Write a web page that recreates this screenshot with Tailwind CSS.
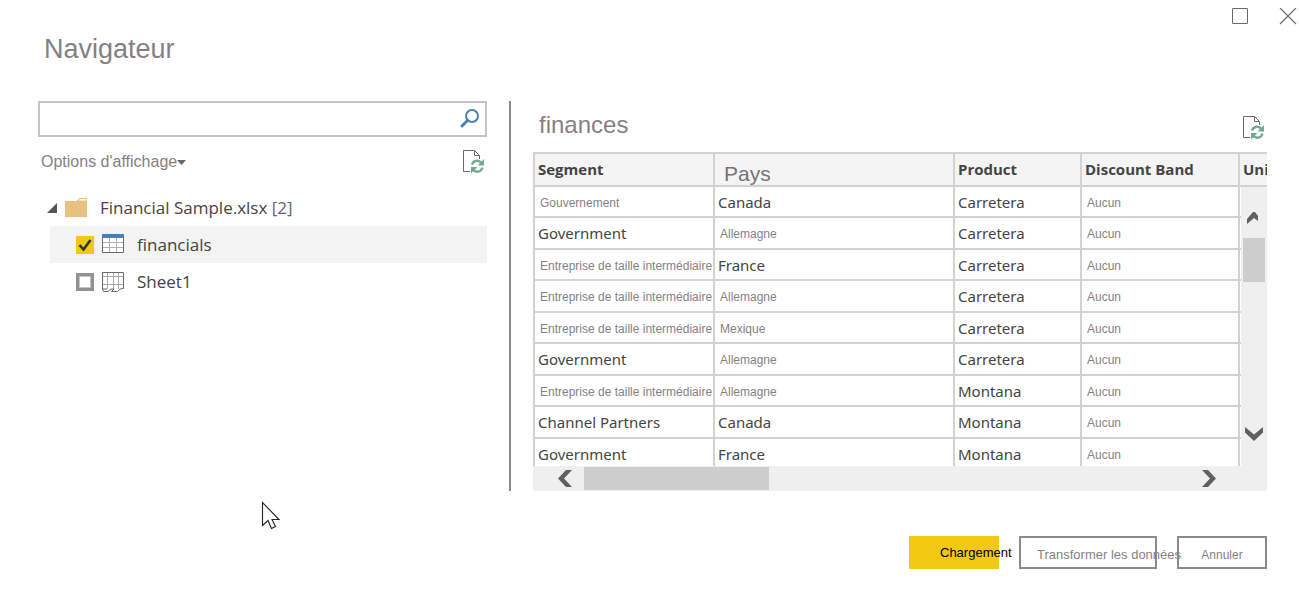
<!DOCTYPE html>
<html lang="fr">
<head>
<meta charset="utf-8">
<title>Navigateur</title>
<script src="https://cdn.jsdelivr.net/npm/@tailwindcss/browser@4"></script>
</head>
<body class="bg-white text-[#444444] font-['Noto_Sans','Open_Sans',sans-serif]">
<svg class="hidden" aria-hidden="true">
  <symbol id="refresh" viewBox="0 0 23 25">
    <path d="M8 22.500H1.500V1.500H12.500L17.500 6.500V10M12.500 1.500V6.500H17.500" fill="none" stroke="#6a6a6a"/>
    <path d="M10 15.500C11.500 11 17 10.500 19.500 14M20.500 18.500C19 23.500 13.500 24 11 20.500" fill="none" stroke="#74a892" stroke-width="2.400"/>
    <path d="M22 10V16.500H15.500ZM9 24.500V18H15.500Z" fill="#74a892"/>
  </symbol>
</svg>
<div class="flex min-h-screen flex-col">
  <div class="flex h-[33px] justify-end gap-[30px] pt-2 pr-[2px]">
    <button type="button" aria-label="Agrandir" class="size-[18px]"><svg class="size-[18px]" viewBox="0 0 18 18"><path d="M1.500.5H16.500V15.500H1.500Z" fill="none" stroke="#6a6a6a"/></svg></button>
    <button type="button" aria-label="Fermer" class="size-[18px]"><svg class="size-[18px]" viewBox="0 0 18 18"><path d="M1 0L17 16M17 0L1 16" fill="none" stroke="#6a6a6a" stroke-width="1.200"/></svg></button>
  </div>
  <h1 class="h-[68px] pl-11 font-['Liberation_Sans',sans-serif] text-[27px] leading-8 text-[#857f84]">Navigateur</h1>

  <main class="flex pr-8 pl-[38px]">
    <section class="w-[449px] shrink-0">
      <label class="flex h-9 items-center border-2 border-[#c4c4c4] pr-1">
        <input type="text" aria-label="Rechercher" class="h-full min-w-0 flex-1 px-2 text-base outline-none">
        <svg class="size-[22px]" viewBox="0 0 22 22"><circle cx="13" cy="8" r="6" fill="none" stroke="#4a7fb8" stroke-width="2"/><path d="M8.500 12.500L3 18" stroke="#4a7fb8" stroke-width="3" stroke-linecap="round"/></svg>
      </label>
      <div class="flex h-[52px] items-start justify-between pt-3 pr-[2px] pl-[3px]">
        <button type="button" class="flex items-center pt-px font-['Liberation_Sans',sans-serif] text-base leading-6 text-[#857f84]">Options d'affichage<svg class="h-[5px] w-[9px]" viewBox="0 0 9 5"><path d="M0 0H9L4.500 5Z" fill="#666"/></svg></button>
        <button type="button" aria-label="Actualiser"><svg class="h-[25px] w-[23px]"><use href="#refresh"/></svg></button>
      </div>
      <ul class="pl-3 font-['Open_Sans','Noto_Sans',sans-serif] text-[17px]">
        <li>
          <div class="flex h-[37px] items-center">
            <svg class="-ml-[3px] h-[10px] w-[10px]" viewBox="0 0 10 10"><path d="M10 0V10H0Z" fill="#555"/></svg>
            <svg class="ml-2 h-[19px] w-[22px]" viewBox="0 0 22 19"><path d="M0 3H11.500L14.500 0H22V19H0Z" fill="#e8c080"/><path d="M13.500 2.500L15 1H21V2.500Z" fill="#fff"/></svg>
            <span class="ml-[13px] whitespace-pre">Financial Sample.xlsx <span class="text-[#666666]">[2]</span></span>
          </div>
          <ul>
            <li>
              <label class="flex h-[37px] items-center bg-[#f3f3f3] pl-[26px]">
                <span class="relative flex size-[18px]">
                  <input type="checkbox" checked class="size-[18px] appearance-none border-[3px] border-[#919191] bg-white checked:border-0 checked:bg-[#f2c811]">
                  <svg class="pointer-events-none absolute inset-0 size-[18px]" viewBox="0 0 18 18"><path d="M3.500 9L7.500 13.500L14.500 4" fill="none" stroke="#333" stroke-width="2.600"/></svg>
                </span>
                <svg class="mb-[2px] ml-2 h-[19px] w-[22px]" viewBox="0 0 22 19"><path d="M.5.5H21.500V18.500H.5Z" fill="#fff" stroke="#6a6a6a"/><path d="M7.500 4V18M14.500 4V18M1 8.500H21M1 13.500H21" stroke="#b0b0b0"/><path d="M0 0H22V4H0Z" fill="#4a7fb8"/></svg>
                <span class="ml-[13px]">financials</span>
              </label>
            </li>
            <li>
              <label class="flex h-[38px] items-center pl-[26px]">
                <input type="checkbox" class="size-[18px] appearance-none border-[3px] border-[#919191] bg-white ring-1 ring-[#c4c4c4] ring-inset">
                <svg class="ml-2 h-[20px] w-[22px]" viewBox="0 0 22 20" fill="none"><path d="M5.500 1V17M11.500 1V17M16.500 1V17M1 4.500H21M1 12.500H21" stroke="#a8a8a8"/><path d="M.5 17V.5H21.500V16.500L18 17L15.500 19.500H9.500L12 17H9L6 19.500H1.500L.5 17H5" stroke="#6a6a6a"/></svg>
                <span class="ml-[13px]">Sheet1</span>
              </label>
            </li>
          </ul>
        </li>
      </ul>
    </section>

    <div class="ml-[22px] w-[2px] shrink-0 bg-[#8a8a8a]"></div>

    <section class="ml-[22px] min-w-0 flex-1">
      <div class="flex h-[51px] justify-between pr-[2px] pl-[6px]">
        <h2 class="pt-2 font-['Liberation_Sans',sans-serif] text-[24px] leading-8 text-[#857f84]">finances</h2>
        <button type="button" aria-label="Actualiser l'aperçu" class="h-[25px] pt-[14px]"><svg class="h-[25px] w-[23px]"><use href="#refresh"/></svg></button>
      </div>
      <div class="relative">
        <div class="h-[314px] overflow-hidden">
          <table class="w-full table-fixed border-separate border-spacing-0 border-t-2 border-l-2 border-[#d2d2d2] text-[15px] leading-5 whitespace-nowrap [&_td]:border-r-2 [&_td]:border-b-2 [&_td]:border-[#d2d2d2] [&_td]:py-0 [&_td]:pl-[3px] [&_th]:border-r-2 [&_th]:border-b-2 [&_th]:border-[#d2d2d2] [&_th]:bg-[#f4f4f4] [&_th]:pt-0 [&_th]:pb-px [&_th]:pl-[3px] [&_th]:text-left [&_th]:font-bold [&_th:last-child]:border-r-0 [&_th:last-child]:pr-0 [&_i]:block [&_i]:pt-[2px] [&_i]:pl-[2px] [&_i]:font-['Liberation_Sans',sans-serif] [&_i]:text-xs [&_i]:text-[#857f84] [&_i]:not-italic">
            <colgroup><col class="w-[180px]"><col class="w-[240px]"><col class="w-[127px]"><col class="w-[158px]"><col></colgroup>
            <thead class="font-['Open_Sans','Noto_Sans',sans-serif]">
              <tr class="h-[33px]"><th>Segment</th><th><span class="block pt-[10px] pl-[6px] font-['Liberation_Sans',sans-serif] text-[21px] font-normal text-[#777277]">Pays</span></th><th>Product</th><th>Discount Band</th><th>Uni</th></tr>
            </thead>
            <tbody class="[&>tr]:h-8 [&>tr:nth-child(odd)]:h-[31px]">
              <tr><td><i>Gouvernement</i></td><td>Canada</td><td>Carretera</td><td><i>Aucun</i></td><td></td></tr>
              <tr><td>Government</td><td><i>Allemagne</i></td><td>Carretera</td><td><i>Aucun</i></td><td></td></tr>
              <tr><td><i>Entreprise de taille intermédiaire</i></td><td>France</td><td>Carretera</td><td><i>Aucun</i></td><td></td></tr>
              <tr><td><i>Entreprise de taille intermédiaire</i></td><td><i>Allemagne</i></td><td>Carretera</td><td><i>Aucun</i></td><td></td></tr>
              <tr><td><i>Entreprise de taille intermédiaire</i></td><td><i>Mexique</i></td><td>Carretera</td><td><i>Aucun</i></td><td></td></tr>
              <tr><td>Government</td><td><i>Allemagne</i></td><td>Carretera</td><td><i>Aucun</i></td><td></td></tr>
              <tr><td><i>Entreprise de taille intermédiaire</i></td><td><i>Allemagne</i></td><td>Montana</td><td><i>Aucun</i></td><td></td></tr>
              <tr><td>Channel Partners</td><td>Canada</td><td>Montana</td><td><i>Aucun</i></td><td></td></tr>
              <tr><td>Government</td><td>France</td><td>Montana</td><td><i>Aucun</i></td><td></td></tr>
            </tbody>
          </table>
        </div>
        <div class="absolute top-[35px] right-0 bottom-[25px] flex w-[26px] flex-col bg-[#efefef] px-[2px]">
          <button type="button" aria-label="Défiler vers le haut" class="flex h-[51px] items-center pt-[10px] pl-1"><svg class="h-3 w-[11px]" viewBox="0 0 11 12"><path d="M0 7L6 0H8L11 4V9L7 6L0 12Z" fill="#606060"/></svg></button>
          <div class="h-11 bg-[#cdcdcd]"></div>
          <button type="button" aria-label="Défiler vers le bas" class="mt-auto flex h-[39px] items-start pl-[2px]"><svg class="h-[14px] w-[18px]" viewBox="0 0 18 14"><path d="M0 0L9 7.500L18 0V5.500L9 14L0 5.500Z" fill="#606060"/></svg></button>
        </div>
        <div class="flex h-[25px] items-center bg-[#efefef]">
          <button type="button" aria-label="Défiler vers la gauche" class="flex w-[51px] pl-[25px]"><svg class="h-[17px] w-[14px]" viewBox="0 0 14 17"><path d="M8 0H14L6 8.500L14 17H8L0 8.500Z" fill="#606060"/></svg></button>
          <div class="h-[23px] w-[185px] bg-[#cdcdcd]"></div>
          <button type="button" aria-label="Défiler vers la droite" class="mr-[51px] ml-auto"><svg class="h-[17px] w-[14px]" viewBox="0 0 14 17"><path d="M0 0H6L14 8.500L6 17H0L8 8.500Z" fill="#606060"/></svg></button>
        </div>
      </div>
    </section>
  </main>

  <footer class="mt-[45px] flex justify-end pr-8 font-['Liberation_Sans',sans-serif] text-[13px] whitespace-nowrap text-[#857f84]">
    <button type="button" class="h-[33px] w-[90px] bg-[#f2c811] pl-[31px] text-left text-black">Chargement</button>
    <button type="button" class="ml-5 h-[33px] w-[138px] border-2 border-[#8a8a8a] pt-1 pl-4 text-left">Transformer les données</button>
    <button type="button" class="ml-5 h-[33px] w-[90px] border-2 border-[#8a8a8a] pt-1 text-xs">Annuler</button>
  </footer>
</div>
<svg class="pointer-events-none absolute top-[501px] left-[261px] h-[29px] w-5" viewBox="0 0 20 29" aria-hidden="true"><path d="M1.500 1.500V24.500L7 19.500L10.500 27.500L14.500 25.500L11 18.500H18Z" fill="#fff" stroke="#1f1f2e" stroke-width="1.100"/></svg>
</body>
</html>
